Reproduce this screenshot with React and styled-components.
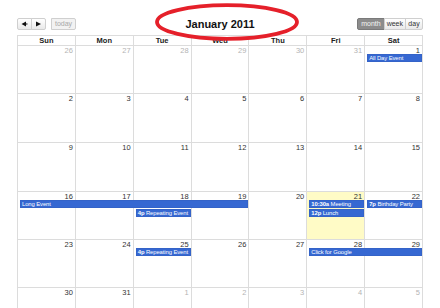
import React from 'react';
import styled, { createGlobalStyle } from 'styled-components';

const Global = createGlobalStyle`
  html, body { margin: 0; padding: 0; background: #fff; }
  body { font-family: "Liberation Sans", Arial, sans-serif; }
`;

const Page = styled.div`
  width: 440px;
  height: 308px;
  overflow: hidden;
  box-sizing: border-box;
  padding: 17px 17px 0 17px;
`;

const Toolbar = styled.div`
  display: grid;
  grid-template-columns: 1fr auto 1fr;
  align-items: center;
  height: 13px;
  margin-bottom: 5px;
`;

const Left = styled.div`
  display: flex;
  gap: 5px;
`;

const Right = styled.div`
  display: flex;
  justify-content: flex-end;
`;

const Group = styled.div`
  display: flex;
`;

const Btn = styled.div`
  height: 12px;
  box-sizing: border-box;
  display: flex;
  align-items: center;
  justify-content: center;
  padding: 0 ${p => p.$pad ?? 3}px;
  min-width: ${p => p.$w || 0}px;
  font-size: 7px;
  border: 1px solid ${p => (p.$active ? '#7a7a7a' : '#cfcfcf')};
  margin-left: -1px;
  color: ${p => (p.$active ? '#f4f4f4' : p.$disabled ? '#a8a8a8' : '#333')};
  background: ${p =>
    p.$active
      ? '#8c8c8c'
      : p.$disabled
      ? '#f2f2f2'
      : 'linear-gradient(#ffffff, #e9e9e9)'};
  &:first-child { margin-left: 0; border-radius: 2px 0 0 2px; }
  &:last-child { border-radius: 0 2px 2px 0; }
`;

const TitleWrap = styled.div`
  position: relative;
  display: flex;
  justify-content: center;
`;

const Title = styled.h2`
  margin: 0;
  font-size: 11px;
  font-weight: bold;
  color: #111;
  line-height: 13px;
  position: relative;
  top: 1px;
`;

const Ring = styled.svg`
  position: absolute;
  left: 50%;
  top: 50%;
  transform: translate(calc(-50% + 7px), calc(-50% - 2px));
  z-index: 3;
  pointer-events: none;
`;

const Table = styled.div`
  width: 406px;
  box-sizing: border-box;
  border-left: 1px solid #dcdcdc;
  border-top: 1px solid #dcdcdc;
`;

const HeadRow = styled.div`
  display: grid;
  grid-template-columns: repeat(7, 1fr);
`;

const HeadCell = styled.div`
  height: 10px;
  box-sizing: border-box;
  border-right: 1px solid #dcdcdc;
  border-bottom: 1px solid #dcdcdc;
  font-size: 7.5px;
  font-weight: bold;
  line-height: 9px;
  text-align: center;
  color: #222;
`;

const Week = styled.div`
  display: grid;
  grid-template-columns: repeat(7, 1fr);
  grid-template-rows: 8px 9px 9px 1fr;
  height: ${p => p.$h}px;
`;

const Day = styled.div`
  grid-row: 1 / -1;
  grid-column: ${p => p.$col};
  box-sizing: border-box;
  border-right: 1px solid #dcdcdc;
  border-bottom: 1px solid #dcdcdc;
  background: ${p => (p.$today ? '#fffbc6' : '#fff')};
  text-align: right;
  padding: 1px 2px 0 0;
  font-size: 7.5px;
  line-height: 7px;
  color: ${p => (p.$other ? '#b4b4b4' : '#333')};
`;

const Event = styled.div`
  grid-column: ${p => p.$col} / span ${p => p.$span};
  grid-row: ${p => p.$row + 2};
  z-index: 1;
  margin: 0 1px 0 2px;
  height: 8px;
  box-sizing: border-box;
  background: #3668d2;
  border: 1px solid #3463c8;
  color: #fff;
  font-size: 5.9px;
  letter-spacing: -0.1px;
  line-height: 6px;
  padding: 0 1px;
  white-space: nowrap;
  overflow: hidden;
  align-self: start;
  b { font-weight: bold; }
`;

const Arrow = ({ dir }) => (
  <svg width="7" height="6" viewBox="0 0 7 6">
    {dir === 'left' ? (
      <path d="M0.5 3 L5 0.5 V5.5 Z M5 2.5 H6.5 V3.5 H5 Z" fill="#111" />
    ) : (
      <path d="M1 0.5 L6 3 L1 5.5 Z" fill="#111" />
    )}
  </svg>
);

const heads = ['Sun', 'Mon', 'Tue', 'Wed', 'Thu', 'Fri', 'Sat'];

const weeks = [
  {
    h: 48,
    days: [[26, 1], [27, 1], [28, 1], [29, 1], [30, 1], [31, 1], [1]],
    events: [{ col: 7, span: 1, row: 0, title: 'All Day Event' }],
  },
  { h: 49, days: [[2], [3], [4], [5], [6], [7], [8]], events: [] },
  { h: 49, days: [[9], [10], [11], [12], [13], [14], [15]], events: [] },
  {
    h: 48,
    today: 6,
    days: [[16], [17], [18], [19], [20], [21], [22]],
    events: [
      { col: 1, span: 4, row: 0, title: 'Long Event' },
      { col: 3, span: 1, row: 1, time: '4p', title: 'Repeating Event' },
      { col: 6, span: 1, row: 0, time: '10:30a', title: 'Meeting' },
      { col: 6, span: 1, row: 1, time: '12p', title: 'Lunch' },
      { col: 7, span: 1, row: 0, time: '7p', title: 'Birthday Party' },
    ],
  },
  {
    h: 48,
    days: [[23], [24], [25], [26], [27], [28], [29]],
    events: [
      { col: 3, span: 1, row: 0, time: '4p', title: 'Repeating Event' },
      { col: 6, span: 2, row: 0, title: 'Click for Google' },
    ],
  },
  {
    h: 48,
    days: [[30], [31], [1, 1], [2, 1], [3, 1], [4, 1], [5, 1]],
    events: [],
  },
];

export default function App() {
  return (
    <>
      <Global />
      <Page>
        <Toolbar>
          <Left>
            <Group>
              <Btn $w={15}><Arrow dir="left" /></Btn>
              <Btn $w={15}><Arrow dir="right" /></Btn>
            </Group>
            <Group>
              <Btn $disabled $w={25}>today</Btn>
            </Group>
          </Left>
          <TitleWrap>
            <Title>January 2011</Title>
            <Ring width="146" height="38" viewBox="0 0 146 38">
              <ellipse cx="73" cy="19" rx="70" ry="16.8" fill="none" stroke="#e5202a" strokeWidth="3.8" />
            </Ring>
          </TitleWrap>
          <Right>
            <Group>
              <Btn $active $w={26}>month</Btn>
              <Btn $w={20} $pad={2}>week</Btn>
              <Btn $w={18} $pad={2}>day</Btn>
            </Group>
          </Right>
        </Toolbar>
        <Table>
          <HeadRow>
            {heads.map(h => (
              <HeadCell key={h}>{h}</HeadCell>
            ))}
          </HeadRow>
          {weeks.map((w, wi) => (
            <Week key={wi} $h={w.h}>
              {w.days.map(([n, other], i) => (
                <Day key={i} $col={i + 1} $other={!!other} $today={w.today === i + 1}>
                  {n}
                </Day>
              ))}
              {w.events.map((e, ei) => (
                <Event key={ei} $col={e.col} $span={e.span} $row={e.row}>
                  {e.time && <b>{e.time} </b>}
                  {e.title}
                </Event>
              ))}
            </Week>
          ))}
        </Table>
      </Page>
    </>
  );
}
